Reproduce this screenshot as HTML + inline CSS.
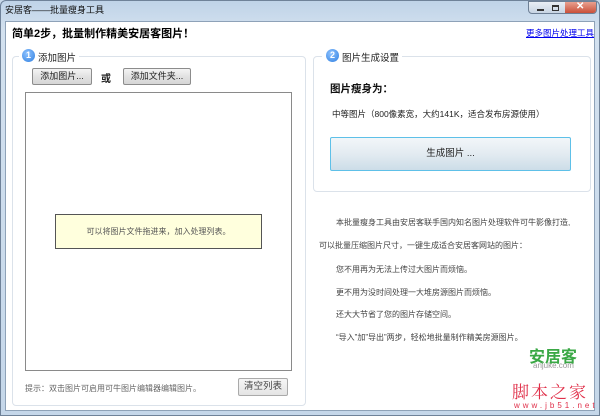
<!DOCTYPE html>
<html><head><meta charset="utf-8"><style>
*{margin:0;padding:0;box-sizing:border-box}
body{width:600px;height:416px;overflow:hidden;background:#c9d9ea;font-family:"Liberation Sans","Noto Sans CJK SC",sans-serif;font-size:9px;color:#222;position:relative}
.a{position:absolute;white-space:nowrap}
.frame{position:absolute;left:0;top:0;width:600px;height:416px;background:linear-gradient(#bfd3e8,#d3e1ef 30px,#c5d7ea);border:1px solid #6f8299;border-radius:6px 6px 0 0}
.client{position:absolute;left:5px;top:21px;width:590px;height:390px;background:#fff;border:1px solid #8ea2b8}
.grp{position:absolute;border:1px solid #dbe2ea;border-radius:4px;background:#fff}
.btn{position:absolute;border:1px solid #8c8c8c;border-radius:2px;background:linear-gradient(#f4f4f4,#e2e2e2 50%,#d6d6d6);text-align:center;font-size:9px}
.num{position:absolute;width:13px;height:13px;border-radius:50%;background:radial-gradient(circle at 40% 35%,#8fc3ff,#2f7fe0);color:#fff;font-size:9px;font-weight:bold;text-align:center;line-height:13px}
.p{font-size:8px;color:#444}
</style></head><body>
<div class="frame"></div>
<div class="a" style="left:5px;top:3px;font-size:9px;color:#111">安居客——批量瘦身工具</div>
<div class="a" style="left:528px;top:1px;width:69px;height:13px;border:1px solid #6d7f95;border-radius:0 0 4px 4px;background:linear-gradient(#e8eef5,#c7d4e3);overflow:hidden">
 <div style="position:absolute;left:36px;top:0;width:32px;height:13px;background:linear-gradient(#e8a08f,#c4412a);"></div>
 <div style="position:absolute;left:8px;top:7px;width:7px;height:2px;background:#333"></div>
 <div style="position:absolute;left:23px;top:3px;width:7px;height:6px;border:1px solid #333;border-top-width:2px"></div>
 <div style="position:absolute;left:47px;top:-1px;color:#fff;font-weight:bold;font-size:10px">✕</div>
</div>
<div class="client"></div>
<div class="a" style="left:12px;top:25px;font-size:11px;font-weight:bold;color:#000">简单2步，批量制作精美安居客图片！</div>
<div class="a" style="left:526px;top:27px;font-size:8.5px;color:#0000ee;text-decoration:underline">更多图片处理工具</div>

<div class="grp" style="left:12px;top:56px;width:294px;height:350px"></div>
<div class="a" style="left:19px;top:49px;width:60px;height:14px;background:#fff"></div>
<div class="num" style="left:22px;top:49px">1</div>
<div class="a" style="left:38px;top:50px;font-size:9.5px">添加图片</div>
<div class="btn" style="left:32px;top:68px;width:60px;height:17px;line-height:15px">添加图片...</div>
<div class="a" style="left:101px;top:70px;font-size:10px;font-weight:bold">或</div>
<div class="btn" style="left:123px;top:68px;width:68px;height:17px;line-height:15px">添加文件夹...</div>
<div class="a" style="left:25px;top:92px;width:267px;height:279px;border:1px solid #8a8a8a;background:#fff"></div>
<div class="a" style="left:55px;top:214px;width:207px;height:35px;border:1px solid #555;background:#ffffdd;text-align:center;line-height:33px;color:#555;font-size:8px">可以将图片文件拖进来，加入处理列表。</div>
<div class="a" style="left:25px;top:383px;color:#666;font-size:8px">提示：双击图片可启用可牛图片编辑器编辑图片。</div>
<div class="btn" style="left:238px;top:378px;width:50px;height:18px;line-height:16px;border-color:#aaa;background:linear-gradient(#f6f6f6,#e4e4e4);color:#444;font-size:9.5px">清空列表</div>

<div class="grp" style="left:313px;top:56px;width:278px;height:136px"></div>
<div class="a" style="left:322px;top:49px;width:80px;height:14px;background:#fff"></div>
<div class="num" style="left:326px;top:49px">2</div>
<div class="a" style="left:342px;top:50px;font-size:9.5px">图片生成设置</div>
<div class="a" style="left:330px;top:81px;font-size:10.5px;font-weight:bold;color:#111">图片瘦身为：</div>
<div class="a" style="left:332px;top:108px;font-size:8.5px">中等图片（800像素宽，大约141K，适合发布房源使用）</div>
<div class="a" style="left:330px;top:137px;width:241px;height:34px;border:1px solid #5ec0e8;border-radius:2px;background:linear-gradient(#f2f6f9,#e3ebf1 50%,#ccdde8);text-align:center;line-height:32px;font-size:9.5px">生成图片 ...</div>

<div class="a p" style="left:336px;top:217px">本批量瘦身工具由安居客联手国内知名图片处理软件可牛影像打造,</div>
<div class="a p" style="left:319px;top:240px">可以批量压缩图片尺寸，一键生成适合安居客网站的图片：</div>
<div class="a p" style="left:336px;top:264px">您不用再为无法上传过大图片而烦恼。</div>
<div class="a p" style="left:336px;top:287px">更不用为没时间处理一大堆房源图片而烦恼。</div>
<div class="a p" style="left:336px;top:309px">还大大节省了您的图片存储空间。</div>
<div class="a p" style="left:336px;top:332px">“导入”加”导出”两步，轻松地批量制作精美房源图片。</div>

<div class="a" style="left:529px;top:343px;font-size:16px;font-weight:bold;color:#3aa845">安居客</div>
<div class="a" style="left:533px;top:361px;font-size:8px;color:#999">anjuke.com</div>
<div class="a" style="left:512px;top:378px;font-size:17px;color:#e0304a;font-family:'Liberation Serif','Noto Serif CJK SC',serif;letter-spacing:2px">脚本之家</div>
<div class="a" style="left:514px;top:401px;font-size:8px;color:#e0304a;letter-spacing:3px">www.jb51.net</div>
</body></html>
